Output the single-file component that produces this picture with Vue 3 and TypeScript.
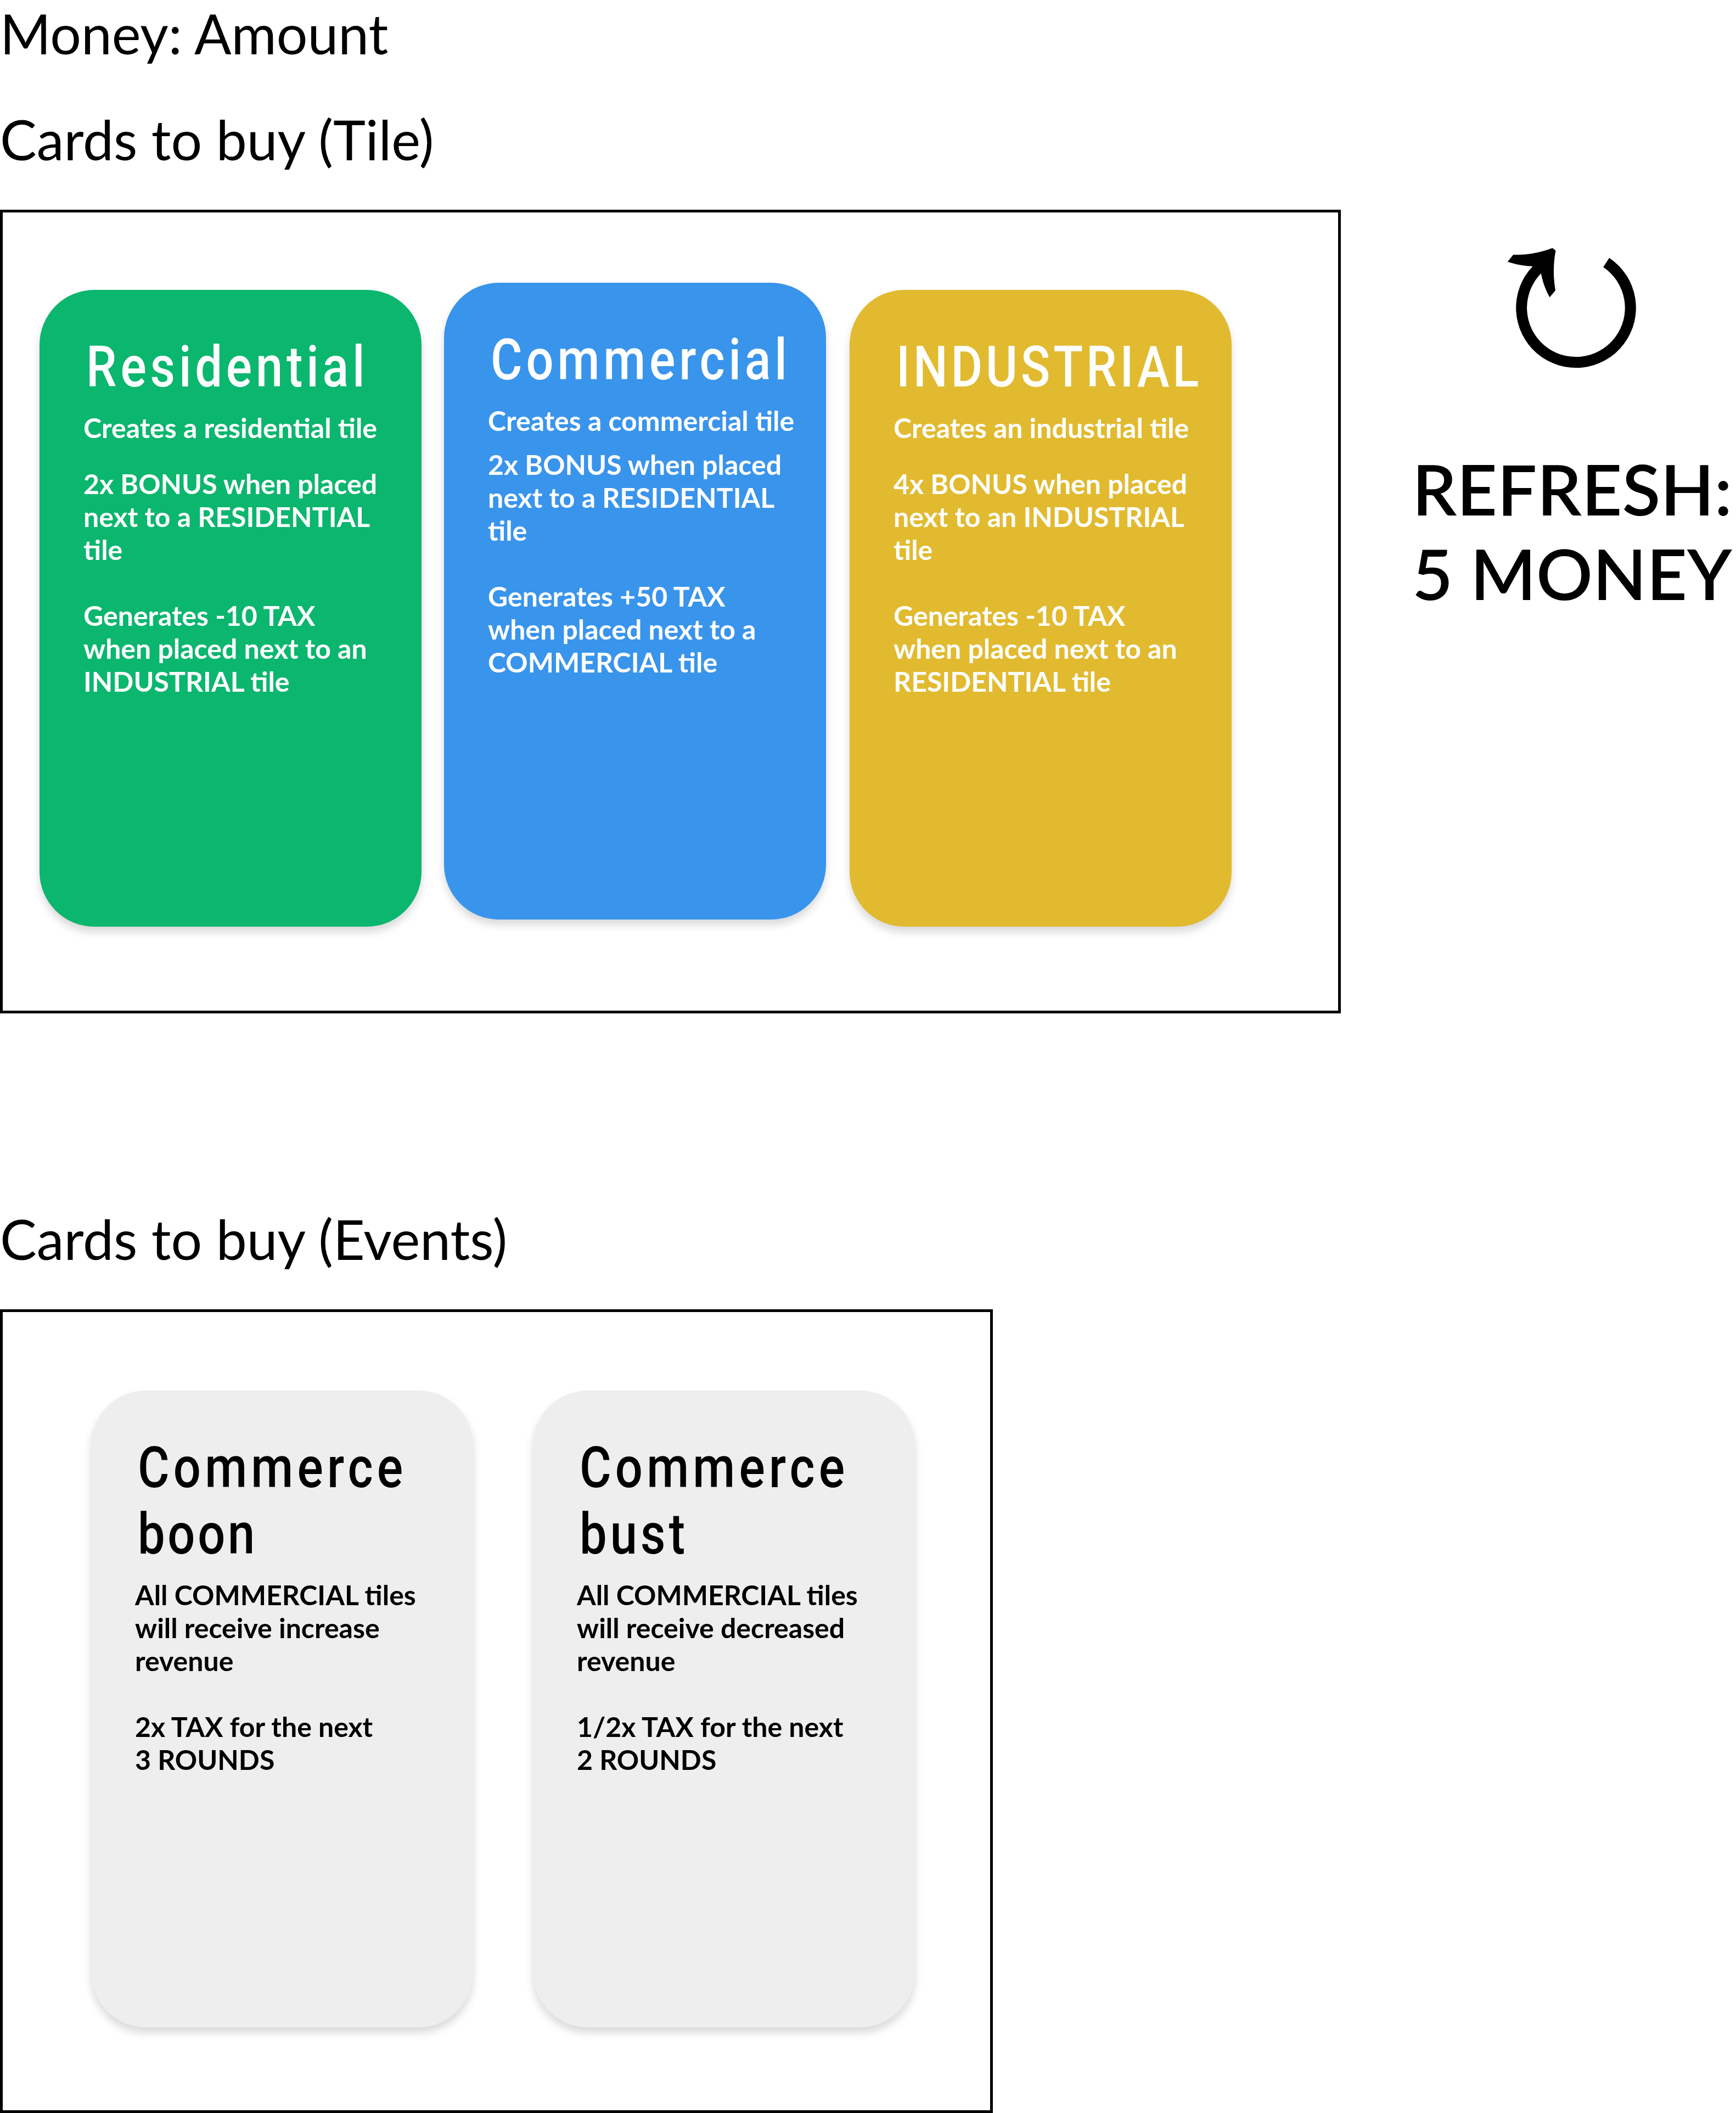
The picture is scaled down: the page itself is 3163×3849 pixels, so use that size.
<script setup lang="ts">
interface TitleLine {
  text: string
  tracking: number
}

interface Card {
  id: string
  title: TitleLine[]
  intro: string
  effects: string
}

const tiles: Card[] = [
  {
    id: 'residential',
    title: [{ text: 'Residential', tracking: 8 }],
    intro: 'Creates a residential tile',
    effects:
      '2x BONUS when placed\nnext to a RESIDENTIAL\ntile\n\nGenerates -10 TAX\nwhen placed next to an\nINDUSTRIAL tile',
  },
  {
    id: 'commercial',
    title: [{ text: 'Commercial', tracking: 8 }],
    intro: 'Creates a commercial tile',
    effects:
      '2x BONUS when placed\nnext to a RESIDENTIAL\ntile\n\nGenerates +50 TAX\nwhen placed next to a\nCOMMERCIAL tile',
  },
  {
    id: 'industrial',
    title: [{ text: 'INDUSTRIAL', tracking: 6.9 }],
    intro: 'Creates an industrial tile',
    effects:
      '4x BONUS when placed\nnext to an INDUSTRIAL\ntile\n\nGenerates -10 TAX\nwhen placed next to an\nRESIDENTIAL tile',
  },
]

const events: Card[] = [
  {
    id: 'boon',
    title: [
      { text: 'Commerce', tracking: 8.4 },
      { text: 'boon', tracking: 5.5 },
    ],
    intro: 'All COMMERCIAL tiles\nwill receive increase\nrevenue',
    effects: '2x TAX for the next\n3 ROUNDS',
  },
  {
    id: 'bust',
    title: [
      { text: 'Commerce', tracking: 8.4 },
      { text: 'bust', tracking: 7.2 },
    ],
    intro: 'All COMMERCIAL tiles\nwill receive decreased\nrevenue',
    effects: '1/2x TAX for the next\n2 ROUNDS',
  },
]
</script>

<template>
  <main class="shop">
    <h1 class="heading">Money: Amount</h1>

    <h1 class="heading tiles-heading">Cards to buy (Tile)</h1>
    <div class="row">
      <section class="tray tile-tray">
        <article v-for="card in tiles" :key="card.id" class="card" :class="card.id">
          <h2 class="title">
            <span
              v-for="line in card.title"
              :key="line.text"
              class="title-line"
              :style="{ letterSpacing: line.tracking + 'px' }"
              >{{ line.text }}</span
            >
          </h2>
          <p class="text">{{ card.intro }}</p>
          <p class="text effects">{{ card.effects }}</p>
        </article>
      </section>

      <aside class="refresh">
        <svg class="refresh-icon" viewBox="2740 440 250 240" aria-hidden="true">
          <path
            d="M2828.5 451.7L2834.5 456.4Q2827.6 492 2834 529.1L2823.5 541.6Q2812 521 2807.8 498.1A89.3 89.3 0 1 0 2921.1 486.6L2932.1 469.8A109.3 109.3 0 1 1 2792.6 485.1Q2773 485 2746.9 477L2757.1 464.1Q2796 464.5 2828.5 451.7Z"
          />
        </svg>
        <p class="refresh-text">REFRESH:<br />5 MONEY</p>
      </aside>
    </div>

    <h1 class="heading events-heading">Cards to buy (Events)</h1>
    <section class="tray event-tray">
      <article v-for="card in events" :key="card.id" class="card event" :class="card.id">
        <h2 class="title">
          <span
            v-for="line in card.title"
            :key="line.text"
            class="title-line"
            :style="{ letterSpacing: line.tracking + 'px' }"
            >{{ line.text }}</span
          >
        </h2>
        <p class="text">{{ card.intro }}</p>
        <p class="text effects">{{ card.effects }}</p>
      </article>
    </section>
  </main>
</template>

<style>
body {
  margin: 0;
  background: #fff;
}
</style>

<style scoped>
.shop {
  width: 3163px;
  height: 3849px;
  overflow: hidden;
  color: #000;
  font-family: Lato, sans-serif;
}
.heading {
  margin: 0;
  font-size: 100px;
  font-weight: 400;
  line-height: 120px;
  white-space: nowrap;
}
.tiles-heading {
  margin-top: 73px;
}
.events-heading {
  margin-top: 350px;
}
.row {
  display: flex;
  align-items: flex-start;
}
.tray {
  display: flex;
  align-items: flex-start;
  box-sizing: border-box;
  height: 1464px;
  margin-top: 69px;
  padding-top: 141px;
  border: 5px solid #000;
}
.tile-tray {
  width: 2443px;
  padding-left: 67px;
}
.event-tray {
  width: 1809px;
  padding-top: 143px;
  padding-left: 161px;
  gap: 109px;
}
.card {
  box-sizing: border-box;
  flex: none;
  width: 696px;
  height: 1160px;
  padding: 80px 0 0 80px;
  border-radius: 100px;
  color: #fff;
  box-shadow: 0 10px 15px rgba(0, 0, 0, 0.15);
}
.residential {
  background: #0bb66e;
}
.commercial {
  margin: -13px 43px 0 41px;
  background: #3994ec;
}
.industrial {
  background: #e1ba2f;
}
.event {
  background: #eee;
  color: #000;
}
.title {
  margin: 0;
  padding: 0 0 20px 5px;
  font-family: Roboto, sans-serif;
  font-size: 104px;
  font-weight: 500;
  line-height: 121px;
}
/* condensed lettering */
.title-line {
  display: block;
  width: max-content;
  transform: scaleX(0.85);
  transform-origin: left;
}
.text {
  margin: 0;
  font-size: 50px;
  font-weight: 700;
  line-height: 60px;
  white-space: pre;
}
.effects {
  margin-top: 42px;
}
.commercial .effects {
  margin-top: 20px;
}
.event .effects {
  margin-top: 60px;
}
.refresh {
  margin: 127px 0 0 130px;
}
.refresh-icon {
  display: block;
  width: 250px;
  height: 240px;
  margin-left: 167px;
}
.refresh-text {
  margin: 133px 0 0;
  font-size: 128px;
  font-weight: 600;
  line-height: 153.6px;
  white-space: nowrap;
}
</style>
